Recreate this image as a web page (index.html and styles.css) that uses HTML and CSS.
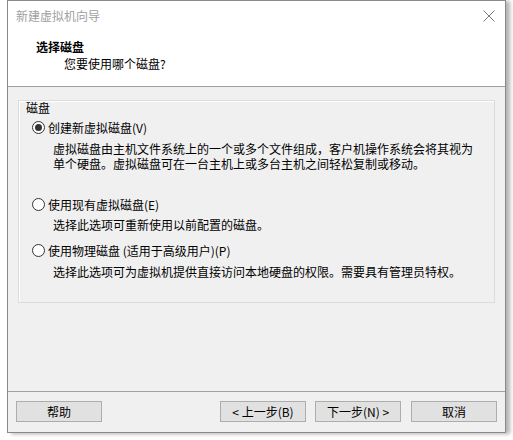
FILE: index.html
```html
<!DOCTYPE html>
<html lang="zh-CN">
<head>
<meta charset="utf-8">
<title>新建虚拟机向导</title>
<link rel="stylesheet" href="styles.css">
</head>
<body>
<div class="window">
  <div class="titlebar">
    <span class="title-text">新建虚拟机向导</span>
    <svg class="close" width="12" height="12" viewBox="0 0 12 12"><path d="M0.5 0.5 L11.5 11.5 M11.5 0.5 L0.5 11.5" stroke="#7a7a7a" stroke-width="1" fill="none"/></svg>
  </div>
  <div class="header">
    <div class="h-title">选择磁盘</div>
    <div class="h-sub">您要使用哪个磁盘?</div>
  </div>
  <div class="body">
    <div class="group">
      <div class="legend">磁盘</div>
      <div class="option first">
        <span class="radio checked"></span><span>创建新虚拟磁盘(V)</span>
      </div>
      <div class="desc">
        <div class="line">虚拟磁盘由主机文件系统上的一个或多个文件组成，客户机操作系统会将其视为</div>
        <div class="line">单个硬盘。虚拟磁盘可在一台主机上或多台主机之间轻松复制或移动。</div>
      </div>
      <div class="option second">
        <span class="radio"></span><span>使用现有虚拟磁盘(E)</span>
      </div>
      <div class="desc d2"><div class="line">选择此选项可重新使用以前配置的磁盘。</div></div>
      <div class="option third">
        <span class="radio"></span><span>使用物理磁盘 (适用于高级用户)(P)</span>
      </div>
      <div class="desc"><div class="line">选择此选项可为虚拟机提供直接访问本地硬盘的权限。需要具有管理员特权。</div></div>
    </div>
  </div>
  <div class="footer">
    <button class="btn">帮助</button>
    <span class="spacer"></span>
    <button class="btn">&lt; 上一步(B)</button>
    <button class="btn">下一步(N) &gt;</button>
    <button class="btn cancel">取消</button>
  </div>
</div>
</body>
</html>
```
FILE: styles.css
```css
html, body {
  margin: 0;
  padding: 0;
  background: #ffffff;
}
body {
  width: 513px;
  height: 440px;
  overflow: hidden;
  font-family: "Noto Sans CJK SC", "Noto Sans", sans-serif;
  font-size: 12px;
  color: #000;
}
.window {
  margin-left: 7px;
  width: 499px;
  height: 433px;
  box-sizing: border-box;
  border: 1px solid #8a8a8a;
  display: flex;
  flex-direction: column;
  background: #f0f0f0;
  box-shadow: 4px 1px 4px rgba(0,0,0,0.3);
}
.titlebar {
  height: 29px;
  flex: none;
  background: #ffffff;
  display: flex;
  align-items: center;
  padding-left: 8px;
  padding-right: 10px;
}
.title-text {
  color: #a0a0a0;
  line-height: 15px;
  flex: 1;
}
.close {
  display: block;
}
.header {
  height: 57px;
  flex: none;
  box-sizing: border-box;
  background: #ffffff;
  border-bottom: 1px solid #a0a0a0;
  padding: 9px 0 0 28px;
  line-height: 15px;
}
.h-title {
  font-weight: bold;
}
.h-sub {
  margin-top: 2px;
  padding-left: 28px;
}
.body {
  height: 305px;
  flex: none;
  box-sizing: border-box;
  padding: 13px 0 0 10px;
  border-bottom: 1px solid #a0a0a0;
}
.group {
  width: 477px;
  height: 203px;
  box-sizing: border-box;
  border: 1px solid #dcdcdc;
  box-shadow: inset 1px 1px 0 #ffffff;
  display: flex;
  flex-direction: column;
  line-height: 15px;
}
.legend {
  margin: -1px 0 0 7px;
}
.option {
  display: flex;
  align-items: center;
  margin-left: 13px;
}
.option.first { margin-top: 5px; }
.option.second { margin-top: 26px; }
.option.third { margin-top: 11px; }
.radio {
  width: 13px;
  height: 13px;
  box-sizing: border-box;
  border: 1px solid #333333;
  border-radius: 50%;
  background: #ffffff;
  margin-right: 3px;
  display: flex;
  align-items: center;
  justify-content: center;
  flex: none;
}
.radio.checked::after {
  content: "";
  width: 7px;
  height: 7px;
  border-radius: 50%;
  background: #333333;
}
.desc {
  margin: 6px 0 0 34px;
}
.desc.d2 { margin-top: 5px; }
.line {
  height: 15px;
  line-height: 15px;
  white-space: nowrap;
}
.footer {
  flex: 1;
  display: flex;
  align-items: flex-start;
  padding: 9px 8px 0 8px;
}
.spacer { flex: 1; }
.btn {
  width: 86px;
  height: 21px;
  box-sizing: border-box;
  border: 1px solid #adadad;
  background: #e1e1e1;
  font-family: inherit;
  font-size: 12px;
  line-height: 15px;
  color: #000;
  padding: 0;
  margin: 0 0 0 9px;
}
.btn:first-child { margin-left: 0; }
.btn.cancel { margin-left: 10px; }
```
